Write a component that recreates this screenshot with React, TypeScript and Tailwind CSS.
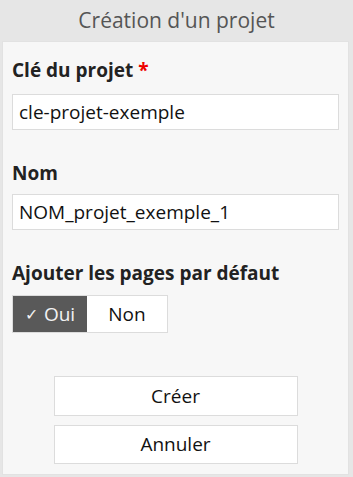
import { useState } from "react"

export default function App() {
  const [withPages, setWithPages] = useState(true)

  return (
    <div
      className="min-h-[477px] w-[353px] bg-[#e6e6e6] pb-[2px]"
      style={{ fontFamily: '"Open Sans", "Noto Sans", sans-serif' }}
    >
      {/* Header */}
      <div className="flex h-[41px] items-center justify-center">
        <h1 className="text-[21px] leading-none text-[#555]">Création d'un projet</h1>
      </div>

      {/* Form panel */}
      <div className="ml-[2px] mr-[4px] border border-[#e2e2e2] bg-[#f7f7f7] px-[9px] pt-[16px] pb-[10px]">
        <label className="block text-[19px] font-bold leading-[24px] text-[#222]">
          Clé du projet <span className="text-[#ee0000]">*</span>
        </label>
        <input
          defaultValue="cle-projet-exemple"
          className="mt-[12px] block h-[36px] w-full border border-[#dcdcdc] bg-white pl-[6px] text-[19px] text-[#111] outline-none"
        />

        <label className="mt-[31px] block text-[19px] font-bold leading-[24px] text-[#222]">Nom</label>
        <input
          defaultValue="NOM_projet_exemple_1"
          className="mt-[9px] block h-[36px] w-full border border-[#dcdcdc] bg-white pl-[6px] text-[19px] text-[#111] outline-none"
        />

        <label className="mt-[31px] block text-[19px] font-bold leading-[24px] text-[#222]">
          Ajouter les pages par défaut
        </label>
        <div className="mt-[10px] flex h-[38px] w-[156px] border border-[#dcdcdc] bg-white">
          <button
            onClick={() => setWithPages(true)}
            className={
              withPages
                ? "flex w-[74px] items-center justify-center bg-[#595959] text-[19px] text-[#f2f2f2]"
                : "flex w-[74px] items-center justify-center bg-white text-[19px] text-[#111]"
            }
          >
            {withPages && <span className="mr-[6px] text-[16px]">✓</span>}
            Oui
          </button>
          <button
            onClick={() => setWithPages(false)}
            className={
              withPages
                ? "flex flex-1 items-center justify-center bg-white text-[19px] text-[#111]"
                : "flex flex-1 items-center justify-center bg-[#595959] text-[19px] text-[#f2f2f2]"
            }
          >
            {!withPages && <span className="mr-[6px] text-[16px]">✓</span>}
            Non
          </button>
        </div>

        {/* Actions */}
        <div className="mt-[43px] flex flex-col items-center gap-[9px]">
          <button className="h-[40px] w-[244px] border border-[#dcdcdc] bg-white text-[19px] text-[#111]">
            Créer
          </button>
          <button className="h-[39px] w-[244px] border border-[#dcdcdc] bg-white text-[19px] text-[#111]">
            Annuler
          </button>
        </div>
      </div>
    </div>
  )
}
